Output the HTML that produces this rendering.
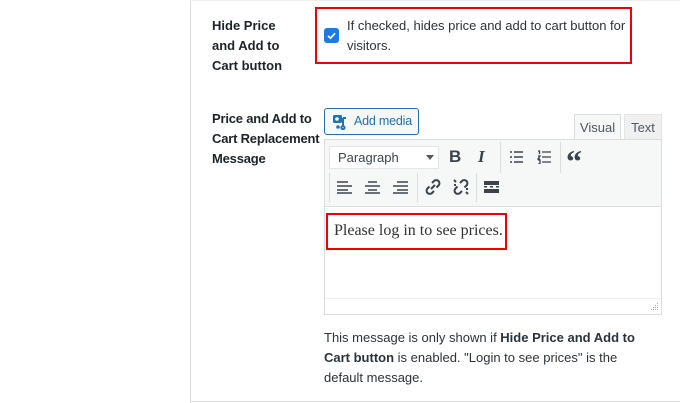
<!DOCTYPE html>
<html><head><meta charset="utf-8"><style>
*{box-sizing:border-box;margin:0;padding:0}
body{width:680px;height:403px;background:#fff;font-family:"Liberation Sans",sans-serif;color:#1d2327;position:relative;overflow:hidden}
.a{position:absolute}
.lbl{font-weight:bold;font-size:13px;line-height:20px;color:#1d2327;white-space:nowrap}
.t{font-size:13px;line-height:20px;color:#2c3338}
svg{position:absolute}
</style></head><body>
<div class="a" style="left:190px;top:0;width:1px;height:403px;background:#dcdcde"></div>
<div class="a" style="left:190px;top:401px;width:490px;height:1px;background:#dcdcde"></div>
<div class="a" style="left:190px;top:0;width:490px;height:1px;background:#eee"></div>

<div class="a lbl" style="left:212px;top:16px">Hide Price<br>and Add to<br>Cart button</div>
<div class="a" style="left:315px;top:7px;width:317px;height:57px;border:2px solid #e00"></div>
<div class="a" style="left:324px;top:28px;width:15px;height:15px;background:#1e7ae0;border-radius:3px"></div>
<svg style="left:324px;top:28px" width="15" height="15"><path d="M4 7.8l2.5 2.4 4.6-5" stroke="#fff" stroke-width="1.6" fill="none"/></svg>
<div class="a t" style="left:347px;top:16px;width:282px">If checked, hides price and add to cart button for visitors.</div>

<div class="a lbl" style="left:212px;top:109px;letter-spacing:-0.2px">Price and Add to<br>Cart Replacement<br>Message</div>
<div class="a" style="left:324px;top:108px;width:95px;height:27px;border:1px solid #2271b1;border-radius:3px;background:#f6f7f7"></div>
<svg style="left:332px;top:114px" width="16" height="16"><rect x="1" y="1" width="9" height="8" rx="1.5" fill="#2271b1"/><circle cx="5" cy="5" r="1.8" fill="#fff"/><path d="M11 4v8M11 4h3M11 12a1.6 1.6 0 1 1 -.1 0" stroke="#2271b1" stroke-width="2" fill="none"/><circle cx="6" cy="13" r="1.8" fill="#2271b1"/></svg>
<div class="a" style="left:354px;top:113px;font-size:12.5px;line-height:17px;color:#2271b1;letter-spacing:-0.2px">Add media</div>
<div class="a" style="left:574px;top:114px;width:47px;height:26px;background:#f6f7f7;border:1px solid #dcdcde;border-bottom:none;font-size:13px;color:#50575e;text-align:center;line-height:25px">Visual</div>
<div class="a" style="left:624px;top:114px;width:38px;height:25px;background:#f0f0f1;border:1px solid #e5e5e5;border-bottom:none;font-size:13px;color:#50575e;text-align:center;line-height:25px">Text</div>

<div class="a" style="left:324px;top:139px;width:338px;height:176px;border:1px solid #dcdcde;background:#fff"></div>
<div class="a" style="left:325px;top:140px;width:336px;height:67px;background:#f6f7f7;border-bottom:1px solid #dcdcde"></div>
<div class="a" style="left:329px;top:146px;width:110px;height:23px;background:#fff;border:1px solid #e5e5e5;font-size:13px;color:#3c434a;line-height:21px;padding-left:8px">Paragraph</div>
<svg style="left:425px;top:154px" width="10" height="8"><path d="M1 1h8l-4 5z" fill="#50575e"/></svg>
<div class="a" style="left:449px;top:147px;font-size:17px;font-weight:bold;color:#3c434a">B</div>
<div class="a" style="left:478px;top:147px;font-size:17px;font-weight:bold;font-style:italic;font-family:'Liberation Serif',serif;color:#3c434a">I</div>
<div class="a" style="left:500px;top:142px;width:1px;height:31px;background:#dcdcde"></div>
<svg style="left:509px;top:150px" width="16" height="14" stroke="#3c434a" stroke-width="1.5"><path d="M1 2h2M1 7h2M1 12h2M5 2h9M5 7h9M5 12h9"/></svg>
<svg style="left:537px;top:150px" width="16" height="14" stroke="#3c434a" stroke-width="1.3" fill="none"><path d="M1 1h1.5v3M1 6h2l-2 3h2M1 10h2v4H1M5 2h9M5 7h9M5 12h9"/></svg>
<div class="a" style="left:560px;top:142px;width:1px;height:31px;background:#dcdcde"></div>
<div class="a" style="left:566px;top:143px;font-size:32px;line-height:36px;font-weight:bold;font-family:'Liberation Serif',serif;color:#3c434a">“</div>
<div class="a" style="left:329px;top:173px;width:1px;height:29px;background:#dcdcde"></div>
<svg style="left:337px;top:180px" width="16" height="14" stroke="#3c434a" stroke-width="1.6"><path d="M0 2h11M0 6h15M0 10h11M0 13h15"/></svg>
<svg style="left:365px;top:180px" width="16" height="14" stroke="#3c434a" stroke-width="1.6"><path d="M3 2h9M0 6h15M3 10h9M0 13h15"/></svg>
<svg style="left:393px;top:180px" width="16" height="14" stroke="#3c434a" stroke-width="1.6"><path d="M4 2h11M0 6h15M4 10h11M0 13h15"/></svg>
<div class="a" style="left:417px;top:173px;width:1px;height:29px;background:#dcdcde"></div>
<svg style="left:424px;top:178px" width="18" height="18" stroke="#3c434a" stroke-width="2" fill="none"><path d="M8 5l2-2a3 3 0 0 1 4.5 4.5l-2 2M10 13l-2 2a3 3 0 0 1-4.5-4.5l2-2M7 11l4-4"/></svg>
<svg style="left:452px;top:178px" width="18" height="18" stroke="#3c434a" stroke-width="2" fill="none"><path d="M8 5l2-2a3 3 0 0 1 4.5 4.5l-2 2M10 13l-2 2a3 3 0 0 1-4.5-4.5l2-2M2 2l2 2M16 16l-2-2M2 7h2M14 11h2"/></svg>
<div class="a" style="left:476px;top:173px;width:1px;height:29px;background:#dcdcde"></div>
<svg style="left:484px;top:181px" width="16" height="12" fill="#3c434a"><rect x="0" y="0" width="15" height="4"/><rect x="0" y="8" width="15" height="4"/><rect x="0" y="5" width="3" height="1.5"/><rect x="6" y="5" width="3" height="1.5"/><rect x="12" y="5" width="3" height="1.5"/></svg>

<div class="a" style="left:326px;top:213px;width:181px;height:37px;border:2px solid #e00"></div>
<div class="a" style="left:334px;top:221px;font-family:'Liberation Serif',serif;font-size:16px;line-height:20px;color:#333">Please log in to see prices.</div>
<div class="a" style="left:325px;top:298px;width:336px;height:1px;background:#f0f0f1"></div>
<svg style="left:651px;top:303px" width="8" height="8" fill="#a7aaad"><rect x="6" y="0" width="1" height="1"/><rect x="4" y="2" width="1" height="1"/><rect x="6" y="2" width="1" height="1"/><rect x="2" y="4" width="1" height="1"/><rect x="4" y="4" width="1" height="1"/><rect x="6" y="4" width="1" height="1"/><rect x="0" y="6" width="1" height="1"/><rect x="2" y="6" width="1" height="1"/><rect x="4" y="6" width="1" height="1"/><rect x="6" y="6" width="1" height="1"/></svg>

<div class="a t" style="left:324px;top:328px;width:320px">This message is only shown if <b>Hide Price and Add to Cart button</b> is enabled. "Login to see prices" is the default message.</div>
</body></html>
